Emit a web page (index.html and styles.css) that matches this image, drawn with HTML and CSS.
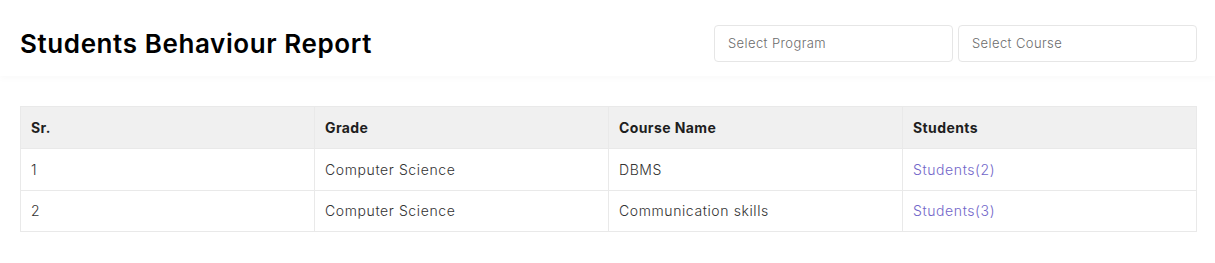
FILE: index.html
```html
<!DOCTYPE html>
<html lang="en">
<head>
    <meta charset="UTF-8">
    <meta name="viewport" content="width=device-width, initial-scale=1.0">
    <title>Students Behaviour Report</title>
    <link rel="stylesheet" href="styles.css">
</head>
<body>
    <div class="page-header">
        <h1>Students Behaviour Report</h1>
        <div class="filters">
            <select class="filter">
                <option>Select Program</option>
            </select>
            <select class="filter">
                <option>Select Course</option>
            </select>
        </div>
    </div>
    <div class="content">
        <table class="report-table">
            <thead>
                <tr>
                    <th>Sr.</th>
                    <th>Grade</th>
                    <th>Course Name</th>
                    <th>Students</th>
                </tr>
            </thead>
            <tbody>
                <tr>
                    <td>1</td>
                    <td>Computer Science</td>
                    <td>DBMS</td>
                    <td><a href="#">Students(2)</a></td>
                </tr>
                <tr>
                    <td>2</td>
                    <td>Computer Science</td>
                    <td>Communication skills</td>
                    <td><a href="#">Students(3)</a></td>
                </tr>
            </tbody>
        </table>
    </div>
</body>
</html>
```

FILE: styles.css
```css
* {
    box-sizing: border-box;
    margin: 0;
    padding: 0;
}
body {
    font-family: Inter, "Open Sans", sans-serif;
    background-color: #fff;
    color: #212529;
}
.page-header {
    display: flex;
    align-items: center;
    justify-content: space-between;
    height: 76px;
    padding: 10px 18px 0 20px;
    box-shadow: 0 3px 6px rgba(0, 0, 0, 0.025);
}
.page-header h1 {
    font-size: 26px;
    font-weight: 600;
    color: #000;
    letter-spacing: 0.6px;
}
.filters {
    display: flex;
    gap: 5px;
}
.filter {
    width: 239px;
    height: 37px;
    padding: 0 13px;
    border: 1px solid #e6e6e6;
    border-radius: 4px;
    background: #fff;
    font-family: inherit;
    font-size: 13px;
    font-weight: 300;
    letter-spacing: 0.4px;
    color: #6c6c6c;
    appearance: none;
}
.content {
    padding: 30px 18px 0 20px;
}
.report-table {
    width: 100%;
    border-collapse: collapse;
    table-layout: fixed;
    font-size: 14px;
}
.report-table th,
.report-table td {
    border: 1px solid #e9e9e9;
    text-align: left;
    padding: 0 10px;
}
.report-table th {
    height: 42px;
    background-color: #f0f0f0;
    font-weight: 700;
    letter-spacing: 0.4px;
    color: #1e1e1e;
}
.report-table td {
    height: 41.5px;
    font-weight: 300;
    letter-spacing: 0.6px;
    color: #333;
}
.report-table a {
    color: #7266c9;
    text-decoration: none;
}
```
